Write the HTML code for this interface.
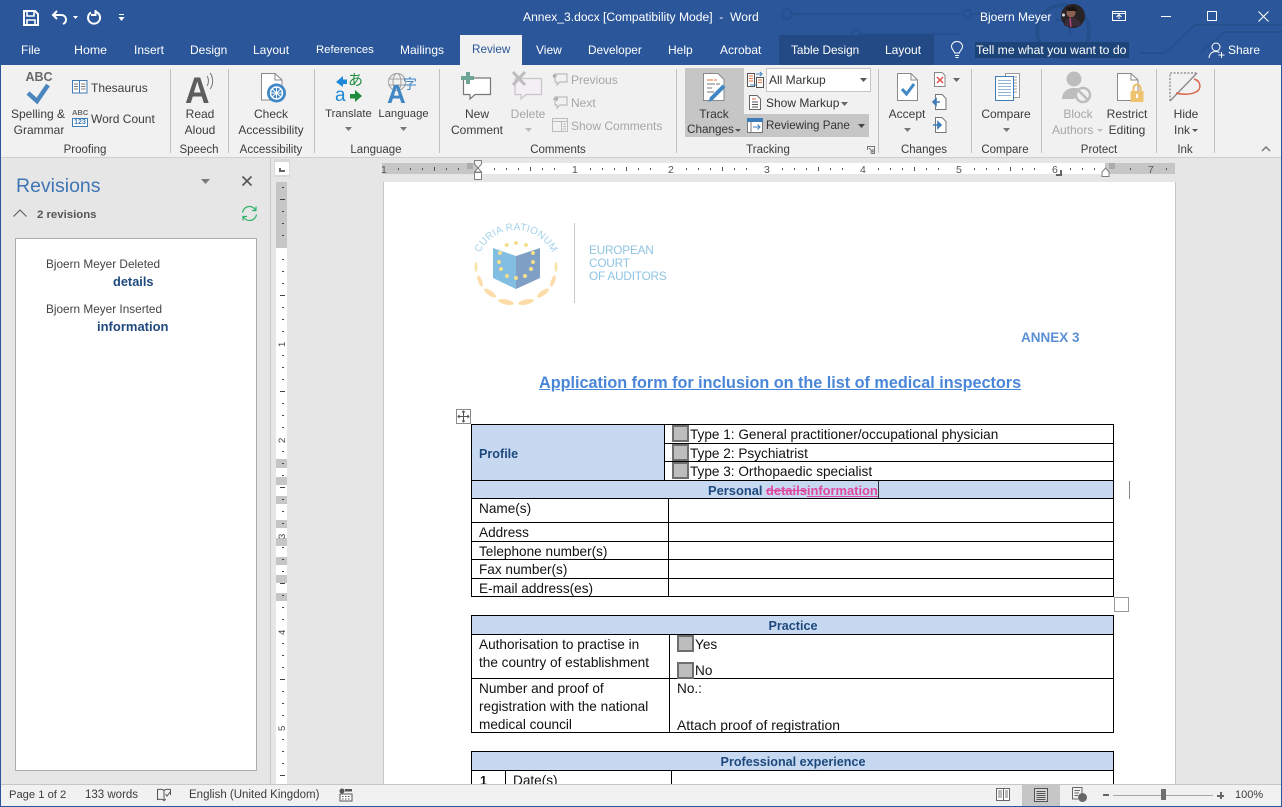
<!DOCTYPE html>
<html lang="en"><head><meta charset="utf-8"><title>Annex_3.docx - Word</title>
<style>
html,body{margin:0;padding:0;width:1282px;height:807px;overflow:hidden;background:#e6e6e6}
body{position:relative;font-family:"Liberation Sans",sans-serif;font-size:12px;color:#3c3c3c}
div,span.a{position:absolute}
.t{position:absolute;white-space:nowrap;line-height:16px;height:16px}
.c{transform:translateX(-50%)}
.w{color:#fff}
.g{color:#a6a6a6}
.d{font-size:13.6px;color:#111}
.h{font-size:12.6px;font-weight:bold;color:#1f497d}
.lb{font-size:11.5px;top:142px}
.l{position:absolute;background:#000}
.s{position:absolute;width:1px;top:69px;height:84px;background:#c0c0c0}
.b{position:absolute;box-sizing:border-box;background:#bdbdbd;border:2px solid #6e6e6e;width:17px;height:17px}
svg{position:absolute;overflow:visible}
</style></head><body>

<!-- title bar -->
<div style="left:0;top:0;width:1282px;height:65px;background:#2b579a"></div>
<svg style="left:0;top:0" width="1282" height="65" viewBox="0 0 1282 65" fill="none" stroke="#264f8e" stroke-width="2">
<path d="M790 14H960M970 14H1000"/><circle cx="787" cy="14" r="5"/><circle cx="967" cy="14" r="4"/>
<circle cx="856" cy="34" r="4"/><path d="M860 34H960"/>
<circle cx="1063" cy="31" r="26" stroke-width="4"/><path d="M1056 20l14 0 0 14" stroke-width="3"/>
<path d="M1140 53H1165L1195 25H1282M1200 53L1225 32H1282M780 60H800L815 50H890L905 60"/>
</svg>
<div style="left:779px;top:35px;width:155px;height:30px;background:#234a84"></div>
<div style="left:975px;top:42px;width:154px;height:16px;background:#1d4478"></div>

<!-- QAT -->
<svg style="left:23px;top:10px" width="16" height="16" viewBox="0 0 16 16" fill="none" stroke="#fff" stroke-width="2"><path d="M1 1H12L15 4V15H1Z"/><path d="M4 1V6H11V1M4 15V10H12V15" stroke-width="1.6"/></svg>
<svg style="left:51px;top:9px" width="30" height="16" viewBox="0 0 30 16" fill="none" stroke="#fff" stroke-width="2"><path d="M6 2L2 6L6 10M2 6H10C14 6 15 9 15 11C15 13 14 14 12 15"/><path d="M22 7H27L24.500 10Z" fill="#fff" stroke="none"/></svg>
<svg style="left:86px;top:9px" width="16" height="16" viewBox="0 0 16 16" fill="none" stroke="#fff" stroke-width="2"><path d="M5 3.500A6 6 0 1 0 10 3M9.500 1V6H5" /></svg>
<svg style="left:118px;top:14px" width="8" height="8" viewBox="0 0 8 8" fill="#fff"><path d="M1 0H6V1H1ZM0.500 3H6.500L3.500 7Z"/></svg>
<div class="t w" style="left:523px;top:9px;font-size:12.1px;white-space:pre">Annex_3.docx [Compatibility Mode]  -  Word</div>
<div class="t w" style="left:980px;top:9px;font-size:12px">Bjoern Meyer</div>
<svg style="left:1061px;top:4px" width="24" height="24" viewBox="0 0 24 24"><circle cx="12" cy="12" r="12" fill="#2a2326"/><circle cx="10" cy="9" r="4.500" fill="#8a5f50"/><path d="M5 4L14 2L16 7L7 7Z" fill="#1a1412"/><path d="M3 22C4 15 8 14 11 14C15 14 19 16 20 22Z" fill="#3b2c3a"/><path d="M9 14L10 23" stroke="#b0447c" stroke-width="1.500"/><circle cx="2.500" cy="11" r="1.500" fill="#ddd"/></svg>
<svg style="left:1112px;top:10px" width="16" height="12" viewBox="0 0 16 12" fill="none" stroke="#fff"><rect x=".5" y="1.500" width="13" height="9"/><path d="M.5 3.500H13.500"/><path d="M4.500 7L7 4.500L9.500 7M7 5V9"/></svg>
<div style="left:1161px;top:16px;width:10px;height:1px;background:#fff"></div>
<div style="left:1207px;top:11px;width:8px;height:8px;border:1px solid #fff"></div>
<svg style="left:1258px;top:11px" width="11" height="11" viewBox="0 0 11 11" stroke="#fff" stroke-width="1.100"><path d="M.5 .5L10.500 10.500M10.500 .5L.5 10.500"/></svg>

<!-- tabs -->
<div style="left:460px;top:35px;width:62px;height:31px;background:#f1f1f1"></div>
<div class="t w" style="left:21px;top:42px">File</div>
<div class="t w" style="left:74px;top:42px;font-size:12.4px">Home</div>
<div class="t w" style="left:134px;top:42px">Insert</div>
<div class="t w" style="left:190px;top:42px">Design</div>
<div class="t w" style="left:253px;top:42px">Layout</div>
<div class="t w" style="left:316px;top:42px;font-size:11.3px">References</div>
<div class="t w" style="left:400px;top:42px">Mailings</div>
<div class="t" style="left:472px;top:42px;color:#2b579a;font-size:11.7px">Review</div>
<div class="t w" style="left:536px;top:42px">View</div>
<div class="t w" style="left:588px;top:42px;font-size:11.8px">Developer</div>
<div class="t w" style="left:668px;top:42px">Help</div>
<div class="t w" style="left:720px;top:42px">Acrobat</div>
<div class="t w" style="left:791px;top:42px;font-size:11.8px">Table Design</div>
<div class="t w" style="left:885px;top:42px">Layout</div>
<svg style="left:950px;top:41px" width="14" height="18" viewBox="0 0 14 18" fill="none" stroke="#fff"><path d="M4.500 12C4.500 9.500 1.500 9 1.500 5.500A5.500 5 0 0 1 12.500 5.500C12.500 9 9.500 9.500 9.500 12Z"/><path d="M5 14.500H9M5.500 16.500H8.500"/></svg>
<div class="t w" style="left:976px;top:42px;font-size:12.2px">Tell me what you want to do</div>
<svg style="left:1208px;top:42px" width="18" height="17" viewBox="0 0 18 17" fill="none" stroke="#fff"><circle cx="8" cy="5" r="4"/><path d="M1 16C1.500 11.500 4 9.500 8 9.500C9.500 9.500 10.500 10 11.500 10.500"/><path d="M13.500 10V16M10.500 13H16.500"/></svg>
<div class="t w" style="left:1228px;top:42px">Share</div>

<!-- ribbon -->
<div style="left:0;top:65px;width:1282px;height:92px;background:#f1f1f1"></div>
<div style="left:0;top:157px;width:1282px;height:1px;background:#cfcfcf"></div>
<div style="left:685px;top:68px;width:59px;height:69px;background:#c6c6c6"></div>
<div style="left:744px;top:114px;width:125px;height:23px;background:#c6c6c6"></div>
<div style="left:766px;top:68px;width:103px;height:22px;background:#fff;border:1px solid #c6c6c6"></div>
<div class="s" style="left:170px"></div><div class="s" style="left:228px"></div><div class="s" style="left:314px"></div><div class="s" style="left:439px"></div><div class="s" style="left:676px"></div><div class="s" style="left:878px"></div><div class="s" style="left:971px"></div><div class="s" style="left:1041px"></div><div class="s" style="left:1156px"></div><div class="s" style="left:1214px"></div>

<!-- Proofing -->
<div class="t c" style="left:39px;top:69px;font-weight:bold;font-size:12.5px;color:#6a6a6a">ABC</div>
<svg style="left:26px;top:82px" width="24" height="22" viewBox="0 0 24 22" fill="none" stroke="#4a86bd" stroke-width="4.500"><path d="M2 11L11 19L22 3"/></svg>
<div class="t c" style="left:38px;top:106px">Spelling &amp;</div>
<div class="t c" style="left:39px;top:122px">Grammar</div>
<svg style="left:72px;top:80px" width="16" height="14" viewBox="0 0 16 14" fill="#fff" stroke="#3f7cb8"><rect x=".5" y=".5" width="7" height="12.500"/><rect x="7.500" y=".5" width="7.500" height="12.500"/><path d="M2 4H6M2 6.500H6M2 9H6M9 4H13.500M9 6.500H13.500M9 9H13.500" stroke="#777"/></svg>
<div class="t" style="left:91px;top:80px">Thesaurus</div>
<div class="t" style="left:72px;top:109px;font-size:7.500px;line-height:8px;font-weight:bold;color:#666;height:8px">ABC</div>
<div style="left:72px;top:118px;width:14px;height:7px;border:1px solid #3f7cb8;background:#fff;font-size:7px;line-height:7px;text-align:center;color:#3f7cb8;font-weight:bold">123</div>
<div class="t" style="left:91px;top:111px">Word Count</div>
<div class="t c lb" style="left:85px">Proofing</div>

<!-- Speech -->
<div class="t" style="left:185px;top:83px;font-size:37px;line-height:16px;font-weight:bold;color:#5d5d5d;height:16px;transform:scaleX(.92);transform-origin:left">A</div>
<svg style="left:206px;top:72px" width="10" height="20" viewBox="0 0 10 20" fill="none" stroke="#777"><path d="M1 4C3 7 3 11 1 14M4 1C7.500 5 7.500 13 4 17"/></svg>
<div class="t c" style="left:200px;top:106px">Read</div>
<div class="t c" style="left:200px;top:122px">Aloud</div>
<div class="t c lb" style="left:199px">Speech</div>

<!-- Accessibility -->
<svg style="left:261px;top:73px" width="28" height="30" viewBox="0 0 28 30"><path d="M.5 .5H14L21 7V27H.5Z" fill="#fff" stroke="#8a8a8a"/><path d="M14 .5V7H21" fill="none" stroke="#8a8a8a"/><circle cx="15.500" cy="20" r="9.500" fill="#3f87c5"/><circle cx="15.500" cy="20" r="6" fill="none" stroke="#fff" stroke-width="1.400"/><path d="M15.500 14V26M9.500 20H21.500M11 16L20 24M20 16L11 24" stroke="#fff"/></svg>
<div class="t c" style="left:271px;top:106px">Check</div>
<div class="t c" style="left:271px;top:122px">Accessibility</div>
<div class="t c lb" style="left:271px">Accessibility</div>

<!-- Language -->
<svg style="left:335px;top:72px" width="29" height="31" viewBox="0 0 29 31"><path d="M1 10L8 4V7.500H12V12H8V15Z" fill="#1e88d8"/><path d="M27 24L20 30V26.500H15V22H20V18Z" fill="#1e8c3c"/></svg>
<div class="t" style="left:348px;top:72px;font-size:15px;color:#1e8c3c;font-family:'Noto Sans CJK JP',sans-serif">あ</div>
<div class="t" style="left:335px;top:88px;font-size:19px;color:#1e88d8">a</div>
<div class="t c" style="left:348.500px;top:106px;font-size:11.300px">Translate</div>
<svg style="left:345px;top:127px" width="7" height="4" fill="#777"><path d="M0 0H7L3.500 4Z"/></svg>
<svg style="left:387px;top:72px" width="20" height="20" viewBox="0 0 20 20" fill="none" stroke="#a0a0a0"><circle cx="10" cy="10" r="8.500"/><ellipse cx="10" cy="10" rx="4" ry="8.500"/><path d="M2 7H18M2 13H18"/></svg>
<div class="t" style="left:387px;top:86px;font-size:26px;font-weight:bold;color:#3f87c5">A</div>
<div class="t" style="left:403px;top:76px;font-size:14px;color:#3f87c5;font-family:'Noto Sans CJK SC',sans-serif">字</div>
<div class="t c" style="left:403.500px;top:106px;font-size:11.300px">Language</div>
<svg style="left:400px;top:127px" width="7" height="4" fill="#777"><path d="M0 0H7L3.500 4Z"/></svg>
<div class="t c lb" style="left:376px">Language</div>

<!-- Comments -->
<svg style="left:460px;top:71px" width="32" height="30" viewBox="0 0 32 30"><path d="M3.500 7H30.500V23.500H15L10 28V23.500H3.500Z" fill="#fff" stroke="#777" stroke-width="1.200"/><path d="M6 1H10V5H14V9H10V13H6V9H1V5H6Z" fill="#6fa594"/></svg>
<div class="t c" style="left:477px;top:106px">New</div>
<div class="t c" style="left:477px;top:122px">Comment</div>
<svg style="left:511px;top:71px" width="32" height="30" viewBox="0 0 32 30"><path d="M4 7.500H30.500V23.500H15L10 28V23.500H4Z" fill="#f4eff4" stroke="#c6c6c6" stroke-width="1.200"/><path d="M2 1L14 14M14 1L2 14" stroke="#bdbdbd" stroke-width="3"/></svg>
<div class="t c g" style="left:528px;top:106px">Delete</div>
<svg style="left:525px;top:128px" width="7" height="4" fill="#bbb"><path d="M0 0H7L3.500 4Z"/></svg>
<svg style="left:552px;top:72px" width="16" height="15" viewBox="0 0 16 15" fill="none" stroke="#bcbcbc" stroke-width="1.200"><path d="M3 2H15V10H8L5 13V10H3Z"/><path d="M1 4H5M1 4L3 2M1 4L3 6" stroke="#a8a8a8"/></svg>
<div class="t g" style="left:571px;top:72px">Previous</div>
<svg style="left:552px;top:95px" width="16" height="15" viewBox="0 0 16 15" fill="none" stroke="#bcbcbc" stroke-width="1.200"><path d="M3 2H15V10H8L5 13V10H3Z"/><path d="M1 4H6M6 4L4 2M6 4L4 6" stroke="#a8a8a8"/></svg>
<div class="t g" style="left:571px;top:95px">Next</div>
<svg style="left:552px;top:118px" width="16" height="14" viewBox="0 0 16 14" fill="none" stroke="#bcbcbc"><rect x=".5" y=".5" width="15" height="13"/><path d="M.5 3.500H15.500M9.500 3.500V13.500M11 6H14M11 8.500H14M11 11H14"/></svg>
<div class="t g" style="left:571px;top:118px">Show Comments</div>
<div class="t c lb" style="left:558px">Comments</div>

<!-- Tracking -->
<svg style="left:703px;top:73px" width="28" height="31" viewBox="0 0 28 31"><path d="M.5 .5H15L21 6.500V27.500H.5Z" fill="#fff" stroke="#8a8a8a"/><path d="M4 7H10M11 7H14" stroke="#e06c3a"/><path d="M4 11H12M4 15H9M4 19H11M13 11H17" stroke="#777"/><path d="M8 26L21 13" stroke="#3f87c5" stroke-width="4"/><path d="M5.500 29L7 24L10 27Z" fill="#3f87c5"/></svg>
<div class="t c" style="left:714px;top:106px;color:#333">Track</div>
<div class="t" style="left:687px;top:122px;color:#333;font-size:11.700px">Changes</div>
<svg style="left:735px;top:129px" width="6" height="3" fill="#555"><path d="M0 0H6L3 3Z"/></svg>
<svg style="left:747px;top:71px" width="17" height="17" viewBox="0 0 17 17" fill="#fff" stroke="#555"><rect x=".5" y="2.500" width="7" height="13"/><rect x="9.500" y="6.500" width="7" height="10"/><path d="M2 5H6M2 7.500H6M2 10H6M11 9H15M11 11.500H15" stroke="#e06c3a"/><path d="M9 3H15M13 1L15 3L13 5M3 14H9" stroke="#3f87c5" fill="none"/></svg>
<div class="t" style="left:769px;top:72px;color:#333">All Markup</div>
<svg style="left:860px;top:78px" width="7" height="4" fill="#555"><path d="M0 0H7L3.500 4Z"/></svg>
<svg style="left:749px;top:95px" width="12" height="15" viewBox="0 0 12 15" fill="#fff" stroke="#666"><path d="M.5 .5H8L11.500 4V14.500H.5Z"/><path d="M3 4H7" stroke="#d9634a"/><path d="M3 7H9M3 9.500H9M3 12H9" stroke="#555"/></svg>
<div class="t" style="left:766px;top:95px;color:#333">Show Markup</div>
<svg style="left:841px;top:102px" width="7" height="4" fill="#666"><path d="M0 0H7L3.500 4Z"/></svg>
<svg style="left:747px;top:118px" width="16" height="15" viewBox="0 0 16 15" fill="#fff" stroke="#777"><rect x=".5" y=".5" width="15" height="14"/><rect x=".5" y=".5" width="15" height="3" fill="#3f7cb8" stroke="#3f7cb8"/><path d="M4 4V14.500" stroke="#777"/><path d="M6 9H13M10.500 6.500L13 9L10.500 11.500" stroke="#3f7cb8" fill="none"/></svg>
<div class="t" style="left:766px;top:118px;color:#333;font-size:11.600px">Reviewing Pane</div>
<svg style="left:858px;top:124px" width="7" height="4" fill="#444"><path d="M0 0H7L3.500 4Z"/></svg>
<div class="t c lb" style="left:768px">Tracking</div>
<svg style="left:867px;top:146px" width="8" height="8" viewBox="0 0 8 8" fill="none" stroke="#777"><path d="M.5 4V.5H7.500V7.500H4"/><path d="M2 2L6 6M6 3V6H3"/></svg>

<!-- Changes -->
<svg style="left:897px;top:73px" width="22" height="29" viewBox="0 0 22 29"><path d="M.5 .5H14L20.500 7V27.500H.5Z" fill="#fff" stroke="#8a8a8a"/><path d="M14 .5V7H20.500" fill="none" stroke="#8a8a8a"/><path d="M5 16L9.500 21L17 11" fill="none" stroke="#3f87c5" stroke-width="3"/></svg>
<div class="t c" style="left:907px;top:106px">Accept</div>
<svg style="left:904px;top:128px" width="7" height="4" fill="#777"><path d="M0 0H7L3.500 4Z"/></svg>
<svg style="left:934px;top:72px" width="12" height="15" viewBox="0 0 12 15"><path d="M.5 .5H8L11 3.500V14.500H.5Z" fill="#fff" stroke="#888"/><path d="M3 5L9 11M9 5L3 11" stroke="#d9534a" stroke-width="1.500"/></svg>
<svg style="left:953px;top:78px" width="7" height="4" fill="#666"><path d="M0 0H7L3.500 4Z"/></svg>
<svg style="left:932px;top:94px" width="15" height="16" viewBox="0 0 15 16"><path d="M3.500 .5H10L14 4.500V15.500H3.500Z" fill="#fff" stroke="#777"/><path d="M1 8H8M1 8L4 5V11Z" stroke="#3f7cb8" stroke-width="1.600" fill="#3f7cb8"/></svg>
<svg style="left:932px;top:117px" width="15" height="16" viewBox="0 0 15 16"><path d="M3.500 .5H10L14 4.500V15.500H3.500Z" fill="#fff" stroke="#777"/><path d="M1 8H7M9 8L6 5V11Z" stroke="#3f7cb8" stroke-width="1.600" fill="#3f7cb8"/></svg>
<div class="t c lb" style="left:924px">Changes</div>

<!-- Compare -->
<svg style="left:995px;top:73px" width="26" height="28" viewBox="0 0 26 28" fill="#fff"><rect x="10.500" y=".5" width="14" height="24" stroke="#999"/><path d="M18 4H22M18 7H22M18 10H22M18 13H22M18 16H22M18 19H22" stroke="#999"/><rect x=".5" y="3.500" width="18" height="24" stroke="#3f7cb8"/><path d="M3 7.500H16M3 10.500H16M3 13.500H16M3 16.500H16M3 19.500H16M3 22.500H16" stroke="#8fb4d8"/></svg>
<div class="t c" style="left:1006px;top:106px">Compare</div>
<svg style="left:1003px;top:128px" width="7" height="4" fill="#777"><path d="M0 0H7L3.500 4Z"/></svg>
<div class="t c lb" style="left:1005px">Compare</div>

<!-- Protect -->
<svg style="left:1061px;top:71px" width="32" height="32" viewBox="0 0 32 32"><circle cx="13" cy="8" r="7.500" fill="#bdbdbd"/><path d="M1 28C1 21 6 17 13 17C17 17 19 18 20 19L13 28Z" fill="#bdbdbd"/><circle cx="22" cy="24" r="7" fill="#f1f1f1" stroke="#bdbdbd" stroke-width="2.500"/><path d="M17.500 19.500L26.500 28.500" stroke="#bdbdbd" stroke-width="2.500"/></svg>
<div class="t c g" style="left:1078px;top:106px">Block</div>
<div class="t g" style="left:1052px;top:122px">Authors</div>
<svg style="left:1097px;top:129px" width="6" height="3" fill="#bbb"><path d="M0 0H6L3 3Z"/></svg>
<svg style="left:1117px;top:73px" width="27" height="30" viewBox="0 0 27 30"><path d="M.5 .5H14L21 7V27.500H.5Z" fill="#fff" stroke="#8a8a8a"/><path d="M14 .5V7H21" fill="none" stroke="#8a8a8a"/><path d="M16.500 18V15A3.500 3.500 0 0 1 23.500 15V18" fill="none" stroke="#e8bd66" stroke-width="2"/><rect x="13.500" y="18" width="13" height="11" fill="#edc36f"/><rect x="19" y="21" width="2" height="4" fill="#fff"/></svg>
<div class="t c" style="left:1127px;top:106px">Restrict</div>
<div class="t c" style="left:1127px;top:122px">Editing</div>
<div class="t c lb" style="left:1099px">Protect</div>

<!-- Ink -->
<svg style="left:1169px;top:72px" width="33" height="30" viewBox="0 0 33 30" fill="none"><path d="M1 29V1H27" stroke="#666" stroke-dasharray="2 1.500"/><path d="M1 29L28 1" stroke="#888" stroke-width="1.300"/><path d="M25 7C32 9 33 17 27 20C22 22.500 14 23 7 21" stroke="#d9634a" stroke-width="1.500"/></svg>
<div class="t c" style="left:1186px;top:106px">Hide</div>
<div class="t" style="left:1174px;top:122px">Ink</div>
<svg style="left:1192px;top:129px" width="6" height="3" fill="#555"><path d="M0 0H6L3 3Z"/></svg>
<div class="t c lb" style="left:1185px">Ink</div>
<svg style="left:1261px;top:146px" width="10" height="6" viewBox="0 0 10 6" fill="none" stroke="#777" stroke-width="1.500"><path d="M1 5L5 1L9 5"/></svg>

<!-- revisions pane -->
<div style="left:270px;top:158px;width:1px;height:626px;background:#c9c9c9"></div>
<div class="t" style="left:16px;top:175px;font-size:19.500px;line-height:22px;height:22px;color:#3f75b5">Revisions</div>
<svg style="left:201px;top:179px" width="9" height="5" fill="#7a7a7a"><path d="M0 0H9L4.500 5Z"/></svg>
<svg style="left:242px;top:176px" width="10" height="10" viewBox="0 0 10 10" stroke="#555" stroke-width="1.600"><path d="M.5 .5L9.500 9.500M9.500 .5L.5 9.500"/></svg>
<svg style="left:13px;top:209px" width="14" height="8" viewBox="0 0 14 8" fill="none" stroke="#555"><path d="M.5 7.500L7 1L13.500 7.500"/></svg>
<div class="t" style="left:37px;top:207px;font-size:11.400px;font-weight:bold;color:#555">2 revisions</div>
<svg style="left:241px;top:205px" width="17" height="17" viewBox="0 0 17 17" fill="none" stroke="#2fb36a" stroke-width="1.200"><path d="M1.500 7.500A7 7 0 0 1 14.500 5M15.500 9.500A7 7 0 0 1 2.500 12"/><path d="M15 1.500V5.500H11M2 15.500V11.500H6"/></svg>
<div style="left:15px;top:238px;width:240px;height:531px;background:#fff;border:1px solid #ababab"></div>
<div class="t" style="left:46px;top:256px;font-size:11.800px;color:#444">Bjoern Meyer Deleted</div>
<div class="t" style="left:113px;top:274px;font-weight:bold;font-size:12.800px;color:#1f497d">details</div>
<div class="t" style="left:46px;top:301px;font-size:11.800px;color:#444">Bjoern Meyer Inserted</div>
<div class="t" style="left:97px;top:319px;font-weight:bold;font-size:13px;color:#1f497d">information</div>

<!-- rulers -->
<div style="left:274px;top:159px;width:16px;height:18px;background:#d9d9d9"></div>
<div style="left:275px;top:162px;width:14px;height:13px;background:#fff"></div>
<div style="left:279px;top:168px;width:6px;height:4px;border-left:2px solid #666;border-bottom:2px solid #666;box-sizing:border-box"></div>
<div style="left:382px;top:163px;width:96px;height:11px;background:#c6c6c6"></div>
<div style="left:478px;top:163px;width:627px;height:11px;background:#fff"></div>
<div style="left:1105px;top:163px;width:70px;height:11px;background:#c6c6c6"></div>
<svg style="left:380px;top:162px" width="780" height="18" viewBox="0 0 780 18" fill="#555" font-family="Liberation Sans" font-size="10.500">
<text x="1" y="11">1</text><text x="192" y="11">1</text><text x="288" y="11">2</text><text x="384" y="11">3</text><text x="480" y="11">4</text><text x="576" y="11">5</text><text x="672" y="11">6</text><text x="768" y="11">7</text>
<path d="M18 6h1v2h-1zM30 6h1v2h-1zM42 6h1v2h-1zM54 5h1v4h-1zM66 6h1v2h-1zM78 6h1v2h-1zM114 6h1v2h-1zM126 6h1v2h-1zM138 6h1v2h-1zM150 5h1v4h-1zM162 6h1v2h-1zM174 6h1v2h-1zM210 6h1v2h-1zM222 6h1v2h-1zM234 6h1v2h-1zM246 5h1v4h-1zM258 6h1v2h-1zM270 6h1v2h-1zM306 6h1v2h-1zM318 6h1v2h-1zM330 6h1v2h-1zM342 5h1v4h-1zM354 6h1v2h-1zM366 6h1v2h-1zM402 6h1v2h-1zM414 6h1v2h-1zM426 6h1v2h-1zM438 5h1v4h-1zM450 6h1v2h-1zM462 6h1v2h-1zM498 6h1v2h-1zM510 6h1v2h-1zM522 6h1v2h-1zM534 5h1v4h-1zM546 6h1v2h-1zM558 6h1v2h-1zM594 6h1v2h-1zM606 6h1v2h-1zM618 6h1v2h-1zM630 5h1v4h-1zM642 6h1v2h-1zM654 6h1v2h-1zM690 6h1v2h-1zM702 6h1v2h-1zM714 6h1v2h-1zM750 6h1v2h-1zM786 6h1v2h-1z"/>
</svg>
<svg style="left:466px;top:160px" width="20" height="22" viewBox="0 0 20 22" fill="#fff" stroke="#808080"><path d="M8.500 .5H15.500V4L12 8L8.500 4Z" fill="#f4f4f4"/><path d="M12 8L8.500 12H15.500Z"/><rect x="8.500" y="12.500" width="7" height="7"/><path d="M1 4H7M1 6H7M1 8H7M2 3V9M4 3V9M6 3V9" stroke="#909090" stroke-width=".6"/></svg>
<svg style="left:1100px;top:160px" width="24" height="18" viewBox="0 0 24 18" fill="#fff" stroke="#808080"><path d="M2 12L5.500 8L9 12V16.500H2Z"/><path d="M9 4H15M9 6H15M9 8H15M10 3V9M12 3V9M14 3V9" stroke="#909090" stroke-width=".6"/></svg>
<div style="left:1056px;top:170px;width:4px;height:4px;border-right:2px solid #666;border-bottom:2px solid #666"></div>
<div style="left:276px;top:182px;width:11px;height:602px;background:#fff"></div>
<div style="left:276px;top:182px;width:11px;height:66px;background:#c6c6c6"></div>
<div style="left:276px;top:459px;width:11px;height:9px;background:#c6c6c6"></div><div style="left:276px;top:477px;width:11px;height:8px;background:#c6c6c6"></div><div style="left:276px;top:496px;width:11px;height:8px;background:#c6c6c6"></div><div style="left:276px;top:520px;width:11px;height:8px;background:#c6c6c6"></div><div style="left:276px;top:538px;width:11px;height:8px;background:#c6c6c6"></div><div style="left:276px;top:557px;width:11px;height:8px;background:#c6c6c6"></div><div style="left:276px;top:575px;width:11px;height:8px;background:#c6c6c6"></div><div style="left:276px;top:593px;width:11px;height:8px;background:#c6c6c6"></div>
<svg style="left:276px;top:182px" width="11" height="602" viewBox="0 0 11 602" fill="#444" font-family="Liberation Sans" font-size="9.500">
<path d="M6 5h2v1h-2zM4 17h5v1h-5zM6 29h2v1h-2zM6 41h2v1h-2zM6 53h2v1h-2zM6 77h2v1h-2zM6 89h2v1h-2zM6 101h2v1h-2zM4 113h5v1h-5zM6 125h2v1h-2zM6 137h2v1h-2zM6 149h2v1h-2zM6 173h2v1h-2zM6 185h2v1h-2zM6 197h2v1h-2zM4 209h5v1h-5zM6 221h2v1h-2zM6 233h2v1h-2zM6 245h2v1h-2zM6 269h2v1h-2zM6 281h2v1h-2zM6 293h2v1h-2zM4 305h5v1h-5zM6 317h2v1h-2zM6 329h2v1h-2zM6 341h2v1h-2zM6 365h2v1h-2zM6 377h2v1h-2zM6 389h2v1h-2zM4 401h5v1h-5zM6 413h2v1h-2zM6 425h2v1h-2zM6 437h2v1h-2zM6 461h2v1h-2zM6 473h2v1h-2zM6 485h2v1h-2zM4 497h5v1h-5zM6 509h2v1h-2zM6 521h2v1h-2zM6 533h2v1h-2zM6 557h2v1h-2zM6 569h2v1h-2zM6 581h2v1h-2zM4 593h5v1h-5z"/>
<text transform="translate(9,165) rotate(-90)">1</text><text transform="translate(9,261) rotate(-90)">2</text><text transform="translate(9,357) rotate(-90)">3</text><text transform="translate(9,453) rotate(-90)">4</text><text transform="translate(9,549) rotate(-90)">5</text>
</svg>

<!-- page -->
<div style="left:383px;top:182px;width:791px;height:602px;background:#fff;border-left:1px solid #c6c6c6;border-right:1px solid #c6c6c6"></div>

<!-- logo -->
<svg style="left:440px;top:210px" width="260" height="110" viewBox="0 0 260 110">
<defs><path id="arc" d="M36 60A40 40 0 0 1 116 60"/></defs>
<g style="filter:blur(.35px)">
<text font-family="Liberation Sans" font-size="10" fill="#a5d2ea" letter-spacing=".3" text-anchor="middle"><textPath href="#arc" startOffset="50%">CURIA RATIONUM</textPath></text>
<path d="M53 38L76 46V79L53 68Z" fill="#82bde2"/><path d="M76 46L100 38V68L76 79Z" fill="#7f9fc5"/>
<g fill="#f5df8e"><circle cx="60" cy="43" r="2"/><circle cx="59" cy="52" r="2"/><circle cx="61" cy="59" r="2"/><circle cx="67" cy="66" r="2"/><circle cx="76" cy="68" r="2"/><circle cx="85" cy="66" r="2"/><circle cx="91" cy="59" r="2"/><circle cx="93" cy="52" r="2"/><circle cx="93" cy="43" r="2"/><circle cx="66.700" cy="35" r="2"/><circle cx="76" cy="33" r="2"/><circle cx="86" cy="35" r="2"/></g>
<g fill="#fbdca8"><ellipse cx="36" cy="57" rx="1.500" ry="5" fill="#f7e6a5"/><ellipse cx="116" cy="57" rx="1.500" ry="5" fill="#f7e6a5"/><ellipse cx="40" cy="71" rx="2" ry="6" transform="rotate(-20 40 71)"/><ellipse cx="113" cy="71" rx="2" ry="6" transform="rotate(20 113 71)"/><ellipse cx="50" cy="83" rx="7" ry="2.500" transform="rotate(35 50 83)"/><ellipse cx="103" cy="83" rx="7" ry="2.500" transform="rotate(-35 103 83)"/><ellipse cx="66" cy="92" rx="8" ry="2.500" transform="rotate(12 66 92)"/><ellipse cx="86" cy="92" rx="8" ry="2.500" transform="rotate(-12 86 92)"/></g>
<rect x="134" y="13" width="1" height="80" fill="#c8c8c8"/>
<g font-family="Liberation Sans" font-size="11.800" fill="#8fc4e2" letter-spacing="-.2"><text x="149" y="44">EUROPEAN</text><text x="149" y="57">COURT</text><text x="149" y="70">OF AUDITORS</text></g>
</g></svg>

<!-- headings -->
<div class="t" style="left:1021px;top:330px;font-size:13.500px;font-weight:bold;color:#5a8fd6">ANNEX 3</div>
<div class="t" style="left:539px;top:374px;font-size:16.200px;line-height:18px;height:18px;font-weight:bold;color:#4a86d8;text-decoration:underline">Application form for inclusion on the list of medical inspectors</div>

<!-- move handle -->
<div style="left:456px;top:409px;width:13px;height:13px;background:#fff;border:1px solid #8a8a8a"></div>
<svg style="left:457px;top:410px" width="13" height="13" viewBox="0 0 13 13" fill="none" stroke="#555"><path d="M6.500 1V12M1 6.500H12M5 2.500L6.500 1L8 2.500M5 10.500L6.500 12L8 10.500M2.500 5L1 6.500L2.500 8M10.500 5L12 6.500L10.500 8"/></svg>

<!-- table 1 backgrounds -->
<div style="left:472px;top:425px;width:192px;height:55px;background:#c6d9f1"></div>
<div style="left:472px;top:481px;width:641px;height:17px;background:#c6d9f1"></div>
<div class="l" style="left:471px;top:424px;width:643px;height:1px"></div>
<div class="l" style="left:665px;top:443px;width:449px;height:1px"></div>
<div class="l" style="left:665px;top:461px;width:449px;height:1px"></div>
<div class="l" style="left:471px;top:480px;width:643px;height:1px"></div>
<div class="l" style="left:471px;top:498px;width:643px;height:1px"></div>
<div class="l" style="left:471px;top:522px;width:643px;height:1px"></div>
<div class="l" style="left:471px;top:541px;width:643px;height:1px"></div>
<div class="l" style="left:471px;top:559px;width:643px;height:1px"></div>
<div class="l" style="left:471px;top:578px;width:643px;height:1px"></div>
<div class="l" style="left:471px;top:596px;width:643px;height:1px"></div>
<div class="l" style="left:471px;top:424px;width:1px;height:173px"></div>
<div class="l" style="left:1113px;top:424px;width:1px;height:173px"></div>
<div class="l" style="left:664px;top:424px;width:1px;height:56px"></div>
<div class="l" style="left:668px;top:498px;width:1px;height:98px"></div>
<div class="b" style="left:672px;top:425px"></div><div class="b" style="left:672px;top:444px"></div><div class="b" style="left:672px;top:462px"></div>
<div class="t h" style="left:479px;top:446px">Profile</div>
<div class="t d" style="left:690px;top:427px">Type 1: General practitioner/occupational physician</div>
<div class="t d" style="left:690px;top:446px">Type 2: Psychiatrist</div>
<div class="t d" style="left:690px;top:464px">Type 3: Orthopaedic specialist</div>
<div class="t h" style="left:708px;top:483px;font-size:12.900px">Personal <span style="color:#e0479e;text-decoration:line-through">details</span><span style="color:#e0479e;text-decoration:underline">information</span></div>
<div class="l" style="left:878px;top:481px;width:1px;height:17px;background:#333"></div>
<div style="left:1129px;top:481px;width:1px;height:18px;background:#888"></div>
<div class="t d" style="left:479px;top:501px">Name(s)</div>
<div class="t d" style="left:479px;top:525px">Address</div>
<div class="t d" style="left:479px;top:544px">Telephone number(s)</div>
<div class="t d" style="left:479px;top:562px">Fax number(s)</div>
<div class="t d" style="left:479px;top:581px">E-mail address(es)</div>
<div style="left:1114px;top:597px;width:13px;height:13px;background:#fff;border:1px solid #999"></div>

<!-- table 2 -->
<div style="left:472px;top:616px;width:641px;height:18px;background:#c6d9f1"></div>
<div class="l" style="left:471px;top:615px;width:643px;height:1px"></div>
<div class="l" style="left:471px;top:634px;width:643px;height:1px"></div>
<div class="l" style="left:471px;top:678px;width:643px;height:1px"></div>
<div class="l" style="left:471px;top:732px;width:643px;height:1px"></div>
<div class="l" style="left:471px;top:615px;width:1px;height:118px"></div>
<div class="l" style="left:1113px;top:615px;width:1px;height:118px"></div>
<div class="l" style="left:669px;top:634px;width:1px;height:98px"></div>
<div class="t h c" style="left:793px;top:618px">Practice</div>
<div class="b" style="left:677px;top:635px"></div><div class="b" style="left:677px;top:662px"></div>
<div class="t d" style="left:479px;top:637px">Authorisation to practise in</div>
<div class="t d" style="left:479px;top:655px">the country of establishment</div>
<div class="t d" style="left:695px;top:637px">Yes</div>
<div class="t d" style="left:695px;top:663px">No</div>
<div class="t d" style="left:479px;top:681px">Number and proof of</div>
<div class="t d" style="left:479px;top:699px">registration with the national</div>
<div class="t d" style="left:479px;top:717px">medical council</div>
<div class="t d" style="left:677px;top:681px">No.:</div>
<div class="t d" style="left:677px;top:717px;font-size:13.900px">Attach proof of registration</div>

<!-- table 3 -->
<div style="left:472px;top:752px;width:641px;height:18px;background:#c6d9f1"></div>
<div class="l" style="left:471px;top:751px;width:643px;height:1px"></div>
<div class="l" style="left:471px;top:770px;width:643px;height:1px"></div>
<div class="l" style="left:471px;top:751px;width:1px;height:33px"></div>
<div class="l" style="left:1113px;top:751px;width:1px;height:33px"></div>
<div class="l" style="left:505px;top:770px;width:1px;height:14px"></div>
<div class="l" style="left:671px;top:770px;width:1px;height:14px"></div>
<div class="t h c" style="left:793px;top:754px">Professional experience</div>
<div class="t h" style="left:480px;top:773px;color:#111">1</div>
<div class="t d" style="left:513px;top:773px">Date(s)</div>

<!-- status bar -->
<div style="left:0;top:784px;width:1282px;height:23px;background:#f1f1f1;border-top:1px solid #c6c6c6;box-sizing:border-box"></div>
<div style="left:1022px;top:785px;width:38px;height:21px;background:#c6c6c6"></div>
<div class="t" style="left:9px;top:787px;font-size:11.200px">Page 1 of 2</div>
<div class="t" style="left:85px;top:787px;font-size:11.500px">133 words</div>
<svg style="left:157px;top:788px" width="15" height="14" viewBox="0 0 15 14" fill="none" stroke="#555"><path d="M7 2.500C5.500 1 3 1 .5 1.500V11.500C3 11 5.500 11 7 12.500V2.500C8.500 1 11 1 13.500 1.500V7M7 12.500C7.500 12 8 11.700 9 11.500"/><path d="M8.500 6L10 8L13.500 3.500" stroke="#555"/></svg>
<div class="t" style="left:189px;top:787px;font-size:11.500px">English (United Kingdom)</div>
<svg style="left:339px;top:788px" width="14" height="14" viewBox="0 0 14 14" fill="#555"><circle cx="3" cy="3" r="2.500"/><rect x="6" y="1" width="7" height="2.500"/><rect x="1" y="6" width="12" height="7" fill="#fff" stroke="#555"/><path d="M3 8h1.500v1H3zM6 8h1.500v1H6zM9 8h1.500v1H9zM3 10.500h1.500v1H3zM6 10.500h1.500v1H6zM9 10.500h1.500v1H9z"/></svg>
<svg style="left:996px;top:788px" width="15" height="13" viewBox="0 0 15 13" fill="#fff" stroke="#666"><path d="M.5 .5H7.500V12.500H.5ZM7.500 .5H13.500V12.500H7.500Z"/><path d="M2 3H6M2 5H6M2 7H6M2 9H6M9 3H12M9 5H12M9 7H12M9 9H12" stroke="#777"/></svg>
<svg style="left:1034px;top:788px" width="14" height="14" viewBox="0 0 14 14" fill="#d5d5d5" stroke="#555"><rect x=".5" y=".5" width="13" height="13"/><path d="M2.500 3.500H11.500M2.500 5.500H11.500M2.500 7.500H11.500M2.500 9.500H11.500M2.500 11.500H11.500" stroke="#555"/></svg>
<svg style="left:1072px;top:787px" width="15" height="15" viewBox="0 0 15 15" fill="none" stroke="#666"><path d="M.5 .5H10V6M.5 .5V12H6"/><path d="M2.500 3.500H8M2.500 6H7M2.500 8.500H6"/><circle cx="10.500" cy="10.500" r="4" fill="#666"/></svg>
<div style="left:1103px;top:794px;width:6px;height:2px;background:#666"></div>
<div style="left:1113px;top:795px;width:100px;height:1px;background:#a6a6a6"></div>
<div style="left:1161px;top:789px;width:5px;height:11px;background:#6e6e6e"></div>
<div style="left:1217px;top:795px;width:7px;height:1.500px;background:#666"></div>
<div style="left:1220px;top:792px;width:1.500px;height:7px;background:#666"></div>
<div class="t" style="left:1235px;top:787px;font-size:11px">100%</div>

<!-- window border -->
<div style="left:0;top:65px;width:1px;height:742px;background:#2b579a"></div>
<div style="left:1281px;top:65px;width:1px;height:742px;background:#2b579a"></div>
<div style="left:0;top:806px;width:1282px;height:1px;background:#2b579a"></div>
</body></html>
